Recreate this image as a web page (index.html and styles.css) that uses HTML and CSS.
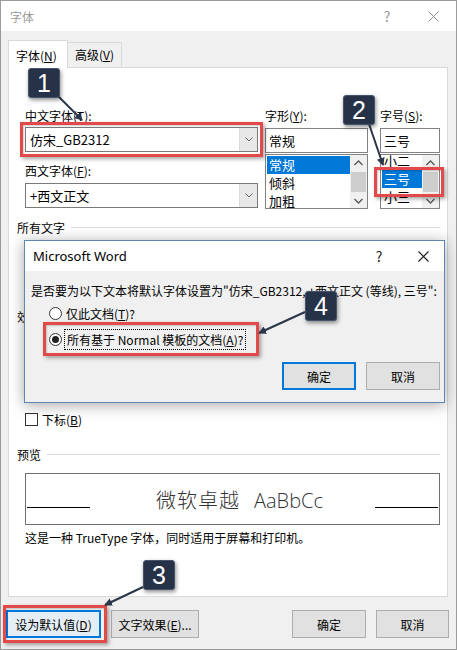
FILE: index.html
```html
<!DOCTYPE html>
<html lang="zh-CN">
<head>
  <meta charset="UTF-8">
  <title>字体</title>
  <link rel="stylesheet" href="styles.css">
</head>
<body>

<div class="window">
  <div class="titlebar">
    <span class="title">字体</span>
    <span class="tb-btn">?</span>
    <span class="tb-btn">
      <svg width="11" height="11" viewBox="0 0 11 11"><path d="M0.5 0.5 L10.5 10.5 M10.5 0.5 L0.5 10.5" stroke="#8a8a8a" stroke-width="1" fill="none"/></svg>
    </span>
  </div>

  <div class="tabs">
    <div class="tab active">字体(<u>N</u>)</div>
    <div class="tab">高级(<u>V</u>)</div>
  </div>

  <div class="panel">
    <div class="font-grid">
      <div class="col">
        <div class="lbl">中文字体(<u>T</u>):</div>
        <div class="combo first">
          <span class="combo-text">仿宋_GB2312</span>
          <span class="drop"><svg width="8" height="5" viewBox="0 0 8 5"><path d="M0.5 0.5 L4 4 L7.5 0.5" stroke="#666" fill="none"/></svg></span>
        </div>
        <div class="lbl second">西文字体(<u>F</u>):</div>
        <div class="combo">
          <span class="combo-text">+西文正文</span>
          <span class="drop"><svg width="8" height="5" viewBox="0 0 8 5"><path d="M0.5 0.5 L4 4 L7.5 0.5" stroke="#666" fill="none"/></svg></span>
        </div>
      </div>

      <div class="col">
        <div class="lbl">字形(<u>Y</u>):</div>
        <div class="field">常规</div>
        <div class="listbox">
          <ul>
            <li class="sel">常规</li>
            <li>倾斜</li>
            <li>加粗</li>
          </ul>
          <div class="scroll">
            <svg width="9" height="6" viewBox="0 0 9 6"><path d="M0.5 5 L4.5 1 L8.5 5" stroke="#555" stroke-width="1.3" fill="none"/></svg>
            <span class="thumb"></span>
            <svg width="9" height="6" viewBox="0 0 9 6"><path d="M0.5 1 L4.5 5 L8.5 1" stroke="#555" stroke-width="1.3" fill="none"/></svg>
          </div>
        </div>
      </div>

      <div class="col">
        <div class="lbl">字号(<u>S</u>):</div>
        <div class="field">三号</div>
        <div class="listbox">
          <ul class="scrolled">
            <li>小二</li>
            <li class="sel">三号</li>
            <li>小三</li>
          </ul>
          <div class="scroll">
            <svg width="9" height="6" viewBox="0 0 9 6"><path d="M0.5 5 L4.5 1 L8.5 5" stroke="#555" stroke-width="1.3" fill="none"/></svg>
            <span class="thumb"></span>
            <svg width="9" height="6" viewBox="0 0 9 6"><path d="M0.5 1 L4.5 5 L8.5 1" stroke="#555" stroke-width="1.3" fill="none"/></svg>
          </div>
        </div>
      </div>
    </div>

    <div class="group all-text"><span>所有文字</span></div>
    <div class="group effects"><span>效果</span></div>

    <div class="check"><span class="box"></span>下标(<u>B</u>)</div>

    <div class="group preview-head"><span>预览</span></div>
    <div class="preview">
      <span class="rule"></span>
      <span class="sample"><span class="cn">微软卓越</span><span class="en">AaBbCc</span></span>
      <span class="rule"></span>
    </div>
    <p class="note">这是一种 TrueType 字体，同时适用于屏幕和打印机。</p>
  </div>

  <div class="footer">
    <button class="btn default">设为默认值(<u>D</u>)</button>
    <button class="btn">文字效果(<u>E</u>)...</button>
    <button class="btn push">确定</button>
    <button class="btn">取消</button>
  </div>

  <!-- confirmation box shown after clicking the default button -->
  <div class="msgbox">
    <div class="msg-title">
      <span class="title">Microsoft Word</span>
      <span class="tb-btn">?</span>
      <span class="tb-btn">
        <svg width="11" height="11" viewBox="0 0 11 11"><path d="M0.5 0.5 L10.5 10.5 M10.5 0.5 L0.5 10.5" stroke="#222" stroke-width="1.2" fill="none"/></svg>
      </span>
    </div>
    <div class="msg-body">
      <p class="msg-text">是否要为以下文本将默认字体设置为"仿宋_GB2312, +西文正文 (等线), 三号":</p>
      <div class="radio"><span class="dot"></span>仅此文档(<u>T</u>)?</div>
      <div class="radio checked"><span class="dot"></span><span class="focus">所有基于 Normal 模板的文档(<u>A</u>)?</span></div>
      <div class="msg-btns">
        <button class="btn primary">确定</button>
        <button class="btn">取消</button>
      </div>
    </div>
  </div>

  <!-- step markers -->
  <div class="mark mark-cn"></div>
  <div class="mark mark-size"></div>
  <div class="mark mark-radio"></div>
  <div class="mark mark-btn"></div>

  <svg class="arrows" width="457" height="650" viewBox="0 0 457 650">
    <defs>
      <marker id="head" markerWidth="8" markerHeight="8" refX="7" refY="4" orient="auto" markerUnits="userSpaceOnUse">
        <path d="M0 0 L8 4 L0 8 Z" fill="#2b3649"/>
      </marker>
    </defs>
    <line x1="57" y1="95" x2="82" y2="120" marker-end="url(#head)"/>
    <line x1="368" y1="121" x2="383" y2="165" marker-end="url(#head)"/>
    <line x1="143" y1="587" x2="105" y2="605" marker-end="url(#head)"/>
    <line x1="305" y1="312" x2="259" y2="333" marker-end="url(#head)"/>
  </svg>

  <div class="badge b1">1</div>
  <div class="badge b2">2</div>
  <div class="badge b3">3</div>
  <div class="badge b4">4</div>
</div>

</body>
</html>
```

FILE: styles.css
```css
* {
  box-sizing: border-box;
}
body {
  margin: 0;
  background: #fff;
  font-family: "Noto Sans CJK SC", sans-serif;
  font-size: 12px;
  color: #000;
}
u {
  text-decoration: underline;
}
.window {
  position: relative;
  width: 457px;
  height: 650px;
  border: 1px solid #9b9b9b;
  background: #f0f0f0;
  overflow: hidden;
}
.titlebar {
  display: flex;
  align-items: center;
  height: 30px;
  padding-left: 9px;
  background: #fff;
  color: #999;
}
.title {
  flex: 1;
}
.tb-btn {
  width: 46px;
  text-align: center;
  font-size: 14px;
  line-height: 1;
}
.tb-btn svg {
  display: block;
  margin: 0 auto;
}

/* tabs */
.tabs {
  display: flex;
  align-items: flex-end;
  margin: 9px 0 0 7px;
}
.tab {
  height: 25px;
  line-height: 24px;
  width: 54px;
  padding-left: 7px;
  border: 1px solid #d9d9d9;
  border-left: none;
  border-bottom: none;
  background: #f0f0f0;
}
.tab.active {
  position: relative;
  z-index: 1;
  height: 28px;
  line-height: 30px;
  width: 60px;
  margin-bottom: -1px;
  border-left: 1px solid #d9d9d9;
  background: #fff;
}
.panel {
  width: 440px;
  height: 530px;
  margin-left: 7px;
  padding: 40px 7px 0 8px;
  border: 1px solid #d9d9d9;
  background: #fff;
}

/* font pickers */
.font-grid {
  display: grid;
  grid-template-columns: 240px 115px 60px;
  margin-left: 8px;
}
.font-grid .col:first-child {
  padding-right: 7px;
}
.font-grid .col:nth-child(2) {
  padding-right: 12px;
}
.lbl {
  height: 16px;
  line-height: 16px;
}
.lbl.second {
  margin-top: 11px;
}
.combo {
  display: flex;
  height: 25px;
  margin-top: 4px;
  border: 1px solid #7a7a7a;
  background: #fff;
}
.combo.first {
  margin-top: 3px;
}
.combo-text {
  flex: 1;
  padding-left: 4px;
  line-height: 23px;
  font-size: 13px;
}
.drop {
  display: flex;
  align-items: center;
  justify-content: center;
  width: 18px;
  background: #e8e8e8;
  border-left: 1px solid #dadada;
}
.field {
  height: 25px;
  margin-top: 4px;
  padding-left: 3px;
  line-height: 23px;
  font-size: 13px;
  border: 1px solid #828282;
}
.listbox {
  display: flex;
  height: 55px;
  margin-top: 1px;
  border: 1px solid #828282;
  overflow: hidden;
}
.listbox ul {
  flex: 1;
  margin: 0;
  padding: 1px 0 0 1px;
  list-style: none;
}
.listbox ul.scrolled {
  margin-top: -4px;
}
.listbox li {
  height: 18px;
  line-height: 18px;
  padding-left: 2px;
  font-size: 13px;
}
.listbox li.sel {
  background: #0078d7;
  color: #fff;
}
.scroll {
  display: flex;
  flex-direction: column;
  align-items: center;
  justify-content: space-between;
  width: 17px;
  padding: 5px 0 4px;
  background: #f0f0f0;
}
.thumb {
  width: 15px;
  height: 20px;
  background: #cdcdcd;
}

/* group captions with a rule after them */
.group {
  display: flex;
  align-items: center;
  height: 16px;
  color: #000;
}
.group::after {
  content: "";
  flex: 1;
  height: 1px;
  margin-left: 6px;
  background: #dcdcdc;
}
.all-text {
  margin-top: 10px;
}
.effects {
  margin-top: 73px;
}
.check {
  display: flex;
  align-items: center;
  height: 16px;
  margin: 87px 0 0 8px;
}
.check .box {
  width: 13px;
  height: 13px;
  margin-right: 4px;
  border: 1px solid #333;
  background: #fff;
}
.preview-head {
  margin-top: 19px;
}
.preview {
  display: flex;
  align-items: center;
  height: 52px;
  margin: 11px 0 0 8px;
  padding: 0 1px;
  border: 1px solid #707070;
}
.rule {
  width: 63px;
  height: 1px;
  margin-top: 16px;
  background: #000;
}
.sample {
  flex: 1;
  padding-left: 14px;
  text-align: center;
  font-size: 20px;
  color: #333;
}
.sample .cn {
  font-weight: 300;
  letter-spacing: 1px;
}
.sample .en {
  margin-left: 14px;
  font-family: "Open Sans", sans-serif;
  font-weight: 300;
}
.note {
  margin: 5px 0 0 8px;
  line-height: 16px;
}

/* bottom buttons */
.footer {
  display: flex;
  gap: 10px;
  padding: 13px 7px 0 5px;
}
.btn {
  height: 28px;
  padding: 0;
  border: 1px solid #adadad;
  background: #e1e1e1;
  font-family: inherit;
  font-size: 12px;
  color: #000;
}
.footer .btn {
  width: 88px;
}
.footer .btn.default {
  width: 95px;
  border: 2px solid #0078d7;
  background: #e5eef6;
}
.footer .btn.push {
  margin-left: auto;
  width: 74px;
}
.footer .btn:last-child {
  width: 73px;
}

/* message box */
.msgbox {
  position: absolute;
  left: 23px;
  top: 239px;
  width: 421px;
  height: 163px;
  border: 1px solid #5d87b1;
  background: #f0f0f0;
  box-shadow: 0 2px 14px rgba(0, 0, 0, 0.35);
}
.msg-title {
  display: flex;
  align-items: center;
  height: 30px;
  padding-left: 8px;
  background: #fff;
}
.msg-title .title {
  font-family: "Noto Sans", sans-serif;
  font-size: 13px;
}
.msg-title .tb-btn {
  width: 46px;
  color: #222;
}
.msg-title .tb-btn:last-child {
  width: 42px;
}
.msg-body {
  padding: 12px 4px 0 6px;
}
.msg-text {
  margin: 0;
  line-height: 16px;
  white-space: nowrap;
}
.radio {
  display: flex;
  align-items: center;
  height: 16px;
  margin: 6px 0 0 18px;
}
.radio.checked {
  margin-top: 10px;
}
.radio .dot {
  position: relative;
  width: 13px;
  height: 13px;
  margin-right: 4px;
  border: 1px solid #333;
  border-radius: 50%;
  background: #fff;
}
.radio.checked .dot::after {
  content: "";
  position: absolute;
  left: 2px;
  top: 2px;
  width: 7px;
  height: 7px;
  border-radius: 50%;
  background: #222;
}
.focus {
  padding: 1px 2px;
  margin-left: -2px;
  border: 1px dotted #000;
}
.msg-btns {
  display: flex;
  justify-content: flex-end;
  gap: 10px;
  margin-top: 15px;
}
.msg-btns .btn {
  width: 74px;
}
.msg-btns .btn.primary {
  border: 2px solid #0078d7;
}

/* annotations */
.mark {
  position: absolute;
  border: 3px solid #e3494b;
  box-shadow: 2px 2px 4px rgba(0, 0, 0, 0.35), inset 1px 1px 2px rgba(0, 0, 0, 0.2);
}
.mark-cn {
  left: 19px;
  top: 121px;
  width: 243px;
  height: 35px;
}
.mark-size {
  left: 373px;
  top: 166px;
  width: 70px;
  height: 30px;
}
.mark-radio {
  left: 42px;
  top: 321px;
  width: 216px;
  height: 34px;
}
.mark-btn {
  left: 2px;
  top: 604px;
  width: 104px;
  height: 38px;
}
.arrows {
  position: absolute;
  left: -1px;
  top: -1px;
}
.arrows line {
  stroke: #2b3649;
  stroke-width: 2;
}
.badge {
  position: absolute;
  width: 32px;
  height: 30px;
  border: 1px solid #46536a;
  border-radius: 3px;
  background: #263247;
  color: #fff;
  font-family: "Liberation Sans", sans-serif;
  font-size: 25px;
  line-height: 28px;
  text-align: center;
  box-shadow: 1px 2px 4px rgba(0, 0, 0, 0.45);
}
.b1 {
  left: 27px;
  top: 67px;
}
.b2 {
  left: 342px;
  top: 94px;
}
.b3 {
  left: 142px;
  top: 559px;
}
.b4 {
  left: 304px;
  top: 290px;
}
```
